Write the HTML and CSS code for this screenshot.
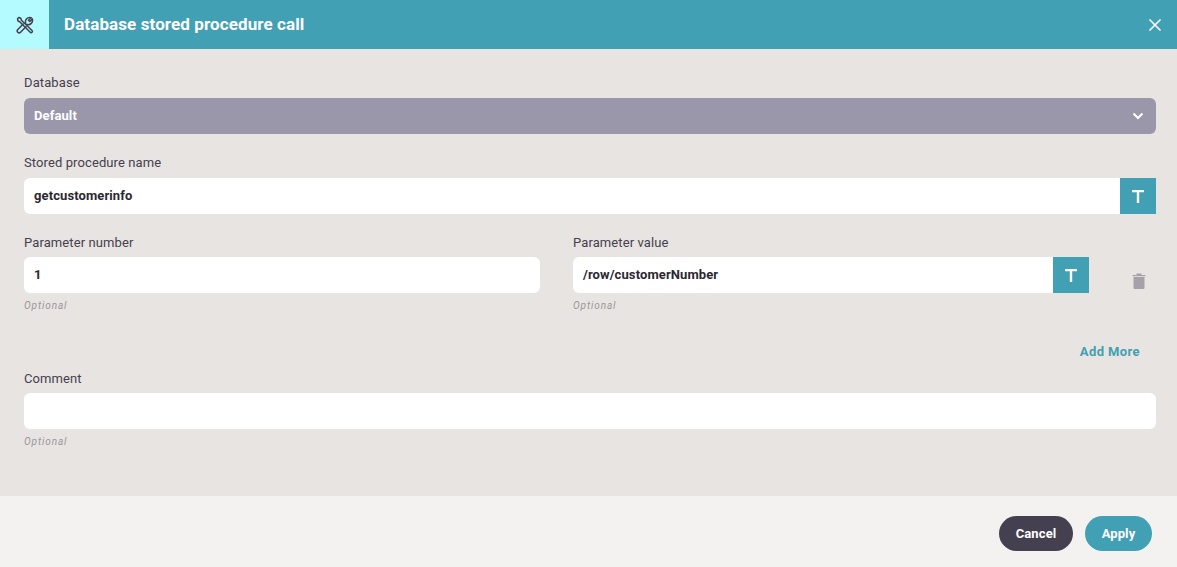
FILE: index.html
```
<!DOCTYPE html>
<html lang="en">
<head>
<meta charset="utf-8">
<title>Database stored procedure call</title>
<link rel="stylesheet" href="styles.css">
</head>
<body>
<div class="dialog">
  <header class="head">
    <div class="head-icon">
      <svg width="18" height="18" viewBox="0 0 18 18" fill="none" stroke="#454050" stroke-width="1.500" stroke-linejoin="round" stroke-linecap="round"><path d="M1.500 2.800l1.300-1.300 2 .8.600 2L16 14.500a1.200 1.200 0 0 1-1.800 1.800L3.700 5.800 2 5z"/><path d="M7.200 8L1.800 13.500a1.800 1.800 0 0 0 2.700 2.700l5.500-5.500"/><path d="M9.700 7.500C8.500 4 11.500.5 15.200 1.800l-2.700 2.400 1.300 1.300 2.500-2.600c1.200 3.500-2 6.500-5.300 5.600"/></svg>
    </div>
    <h1 class="title">Database stored procedure call</h1>
    <svg class="close" width="14" height="14" viewBox="0 0 14 14" stroke="#fff" stroke-width="1.600"><path d="M1.500 1.500l11 11M12.500 1.500l-11 11"/></svg>
  </header>
  <main class="body">
    <label class="label">Database</label>
    <div class="select">
      <span class="select-value">Default</span>
      <svg width="12" height="8" viewBox="0 0 12 8" fill="none" stroke="#fff" stroke-width="2"><path d="M1.500 1.500L6 6l4.500-4.500"/></svg>
    </div>
    <label class="label gap-stored">Stored procedure name</label>
    <div class="input-row">
      <div class="input joined">getcustomerinfo</div>
      <div class="t-btn"><svg width="12" height="13" viewBox="0 0 12 13"><path fill="#fff" d="M0 0h12v2.200H7.200V13H4.800V2.200H0z"/></svg></div>
    </div>
    <div class="param-grid">
      <div class="col col-first">
        <label class="label tight">Parameter number</label>
        <div class="input">1</div>
        <div class="hint">Optional</div>
      </div>
      <div class="col">
        <label class="label tight">Parameter value</label>
        <div class="input-row">
          <div class="input joined">/row/customerNumber</div>
          <div class="t-btn"><svg width="12" height="13" viewBox="0 0 12 13"><path fill="#fff" d="M0 0h12v2.200H7.200V13H4.800V2.200H0z"/></svg></div>
        </div>
        <div class="hint">Optional</div>
      </div>
      <div class="trash-cell">
        <svg width="14" height="18" viewBox="0 0 14 18"><path fill="#a5a1a8" d="M0.500 3h13v1.200H.5z"/><path fill="#a5a1a8" d="M4.500 1.500h5V3h-5z"/><path fill="#a5a1a8" d="M1.500 5h11v10.700a1.300 1.300 0 0 1-1.300 1.300H2.800a1.300 1.300 0 0 1-1.300-1.300z"/></svg>
      </div>
    </div>
    <div class="add-row"><span class="add-more">Add More</span></div>
    <label class="label tight">Comment</label>
    <div class="input"></div>
    <div class="hint">Optional</div>
  </main>
  <footer class="foot">
    <button class="btn cancel">Cancel</button>
    <button class="btn apply">Apply</button>
  </footer>
</div>
</body>
</html>
```
FILE: styles.css
```
* { box-sizing: border-box; }
html, body { margin: 0; height: 100%; }
body { font-family: Roboto, "Liberation Sans", sans-serif; color: #454050; overflow: hidden; }
.dialog { width: 1177px; height: 567px; display: flex; flex-direction: column; background: #e8e4e1; }
.head { height: 49px; flex: none; display: flex; align-items: center; background: #41a0b3; color: #fff; }
.head-icon { width: 49px; height: 49px; background: #b3fbff; display: flex; align-items: center; justify-content: center; }
.title { margin: 0 0 0 15px; flex: 1; font-size: 17px; letter-spacing: .1px; line-height: 49px; font-weight: 700; }
.close { margin-right: 15px; }
.body { flex: 1; padding: 25px 21px 0 24px; }
.label { display: block; height: 24px; font-size: 13px; letter-spacing: .1px; line-height: 17px; color: #454050; }
.label.tight { height: 23px; }
.select { height: 36px; background: #9a97aa; border-radius: 6px; color: #fff; font-size: 13px; letter-spacing: .1px; font-weight: 700; display: flex; align-items: center; justify-content: space-between; padding: 0 12px 0 10px; }
.select-value { line-height: 35px; height: 36px; }
.gap-stored { margin-top: 20px; }
.input-row { display: flex; }
.input { height: 36px; flex: 1; background: #fff; border-radius: 6px; padding: 0 10px; font-size: 13px; letter-spacing: .1px; line-height: 35px; font-weight: 700; color: #2b2830; }
.input.joined { border-radius: 6px 0 0 6px; }
.t-btn { width: 36px; height: 36px; flex: none; background: #41a0b3; display: flex; align-items: center; justify-content: center; }
.param-grid { display: grid; grid-template-columns: 549px 516px 67px; margin-top: 20px; }
.col-first { padding-right: 33px; }
.hint { margin-top: 6px; height: 13px; font-size: 10px; line-height: 13px; font-style: italic; letter-spacing: .9px; color: #9a969c; }
.trash-cell { display: flex; justify-content: flex-end; padding-top: 38px; padding-right: 10px; }
.add-row { display: flex; justify-content: flex-end; padding-right: 16px; margin-top: 31px; height: 27px; }
.add-more { font-size: 13px; letter-spacing: .4px; line-height: 17px; font-weight: 700; color: #41a0b3; }
.foot { height: 71px; flex: none; background: #f4f2f0; display: flex; justify-content: flex-end; align-items: flex-start; gap: 12px; padding: 20px 25px 0 0; }
.btn { height: 35px; border: 0; border-radius: 18px; color: #fff; font: 700 13px Roboto, "Liberation Sans", sans-serif; letter-spacing: .1px; }
.cancel { width: 74px; background: #454050; }
.apply { width: 67px; background: #41a0b3; }
```
